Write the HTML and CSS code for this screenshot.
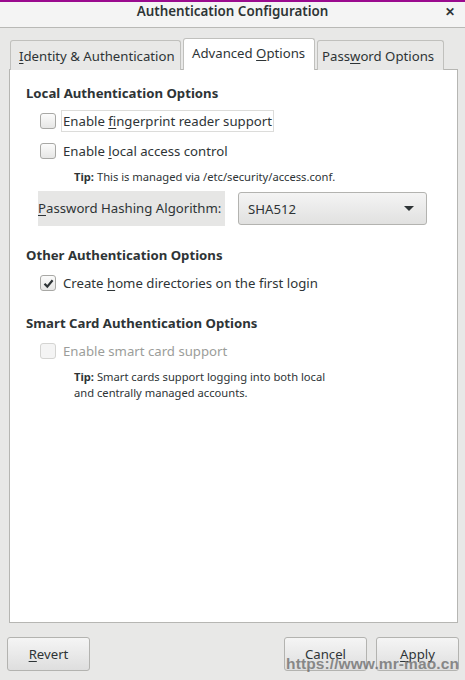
FILE: index.html
```html
<!DOCTYPE html>
<html lang="en">
<head>
    <meta charset="UTF-8">
    <title>Authentication Configuration</title>
    <link rel="stylesheet" href="styles.css">
</head>
<body>
    <div class="topline"></div>

    <!-- Title bar -->
    <div class="titlebar">
        <span></span>
        <span class="title">Authentication Configuration</span>
        <span class="close">&#x2715;</span>
    </div>

    <div class="dialog">
        <!-- Tabs -->
        <div class="tabs">
            <div class="tab tab1"><u>I</u>dentity &amp; Authentication</div>
            <div class="tab tab2 active">Advanced <u>O</u>ptions</div>
            <div class="tab tab3">Pass<u>w</u>ord Options</div>
        </div>

        <div class="panel">
            <div class="heading h1">Local Authentication Options</div>

            <div class="check row1">
                <span class="box"></span>
                <span class="label focused">Enable <u>f</u>ingerprint reader support</span>
            </div>
            <div class="check row2">
                <span class="box"></span>
                <span class="label">Enable <u>l</u>ocal access control</span>
            </div>
            <div class="tip tip1"><b>Tip:</b> This is managed via /etc/security/access.conf.</div>

            <div class="hashrow">
                <div class="hashlabel"><u>P</u>assword Hashing Algorithm:</div>
                <div class="combo">
                    <span>SHA512</span>
                    <span class="arrow"></span>
                </div>
            </div>

            <div class="heading h2">Other Authentication Options</div>
            <div class="check row3">
                <span class="box checked">
                    <svg width="11" height="11" viewBox="0 0 11 11"><path d="M1.5 5.8 L4.3 8.6 L9.6 2.2" fill="none" stroke="#2e3436" stroke-width="2.2"/></svg>
                </span>
                <span class="label">Create <u>h</u>ome directories on the first login</span>
            </div>

            <div class="heading h3">Smart Card Authentication Options</div>
            <div class="check row4 disabled">
                <span class="box"></span>
                <span class="label">Enable smart card support</span>
            </div>
            <div class="tip tip2"><b>Tip:</b> Smart cards support logging into both local<br>and centrally managed accounts.</div>
        </div>

        <!-- Buttons -->
        <div class="buttons">
            <div class="btn"><u>R</u>evert</div>
            <div class="spacer"></div>
            <div class="btn">Cancel</div>
            <div class="btn"><u>A</u>pply</div>
        </div>
    </div>

    <div class="watermark">https://www.mr-mao.cn</div>
</body>
</html>
```

FILE: styles.css
```css
* {
    box-sizing: border-box;
}

body {
    margin: 0;
    width: 465px;
    height: 680px;
    overflow: hidden;
    position: relative;
    background: #e8e8e7;
    color: #2e3436;
    font-family: "Noto Sans", "Open Sans", sans-serif;
    font-size: 13.2px;
}

u {
    text-decoration-thickness: 1px;
    text-underline-offset: 2px;
}

.topline {
    height: 2px;
    background: #9a0a8e;
}

.titlebar {
    height: 26px;
    background: #f4f4f4;
    border-bottom: 1px solid #b9b9b6;
    display: grid;
    grid-template-columns: 1fr auto 1fr;
    align-items: start;
}

.title {
    font-weight: 600;
    font-size: 13.4px;
    line-height: 18px;
}

.close {
    justify-self: end;
    margin-right: 10px;
    margin-top: 1px;
    font-size: 12px;
    font-weight: bold;
}

.dialog {
    padding: 11px 6px 9px 9px;
    display: flex;
    flex-direction: column;
    height: 652px;
}

.tabs {
    display: flex;
    align-items: flex-end;
    padding-left: 1px;
    gap: 2px;
    height: 31px;
    position: relative;
    z-index: 1;
}

.tab {
    height: 30px;
    padding: 2px 6px 0 8px;
    border: 1px solid #c0c0bd;
    border-bottom: none;
    border-radius: 3px 3px 0 0;
    background: #e8e8e7;
    line-height: 26px;
    white-space: nowrap;
}

.tab.active {
    height: 32px;
    background: #ffffff;
    line-height: 26px;
    padding-top: 1px;
}

.tab1 { width: 171px; }
.tab2 { width: 132px; }
.tab3 { width: 127px; padding-left: 4px; }

.panel {
    flex: 1;
    background: #ffffff;
    border: 1px solid #b6b6b3;
    margin-top: -1px;
    margin-right: 1px;
    padding: 13px 16px 0 16px;
    display: flex;
    flex-direction: column;
    align-items: flex-start;
}

.heading {
    font-weight: bold;
    line-height: 20px;
}

.h2, .h3 {
    margin-top: 19px;
}

.check {
    display: flex;
    align-items: center;
    margin-left: 14px;
    height: 22px;
}

.row1 { margin-top: 7px; }
.row2 { margin-top: 8px; }
.row3 { margin-top: 7px; }
.row4 { margin-top: 7px; }

.box {
    width: 16px;
    height: 16px;
    border: 1px solid #a8a8a5;
    border-radius: 3px;
    background: linear-gradient(#fbfbfb, #e6e6e5);
    display: flex;
    align-items: center;
    justify-content: center;
}

.label {
    margin-left: 5px;
    padding: 0 1px;
    border: 1px solid transparent;
    line-height: 20px;
    white-space: nowrap;
}

.label.focused {
    border-color: #dcdcda;
}

.disabled .box {
    border-color: #d4d4d2;
    background: #f4f4f4;
}

.disabled .label {
    color: #9b9d9a;
}

.tip {
    margin-left: 48px;
    margin-top: 7px;
    font-size: 11.2px;
    line-height: 16px;
}

.tip b {
    font-weight: bold;
}

.hashrow {
    display: flex;
    align-items: center;
    margin-left: 12px;
    margin-top: 6px;
    gap: 13px;
}

.hashlabel {
    width: 187px;
    height: 35px;
    background: #e6e6e5;
    line-height: 35px;
    white-space: nowrap;
}

.combo {
    width: 189px;
    height: 33px;
    border: 1px solid #b3b3b0;
    border-radius: 3px;
    background: linear-gradient(#f4f4f4, #e1e1e0);
    display: flex;
    align-items: center;
    justify-content: space-between;
    padding: 0 12px 0 9px;
}

.arrow {
    width: 0;
    height: 0;
    border-left: 5px solid transparent;
    border-right: 5px solid transparent;
    border-top: 5px solid #2e3436;
}

.buttons {
    display: flex;
    margin-top: 14px;
    gap: 9px;
    margin-left: -2px;
}

.spacer {
    flex: 1;
}

.btn {
    width: 83px;
    height: 34px;
    border: 1px solid #b3b3b0;
    border-radius: 3px;
    background: linear-gradient(#f5f5f5, #dedede);
    text-align: center;
    line-height: 32px;
}

.watermark {
    position: absolute;
    right: 6px;
    bottom: 7px;
    font-family: "Liberation Sans", sans-serif;
    font-size: 15.5px;
    font-weight: bold;
    color: rgba(110, 110, 110, 0.8);
    letter-spacing: 0.1px;
}
```
